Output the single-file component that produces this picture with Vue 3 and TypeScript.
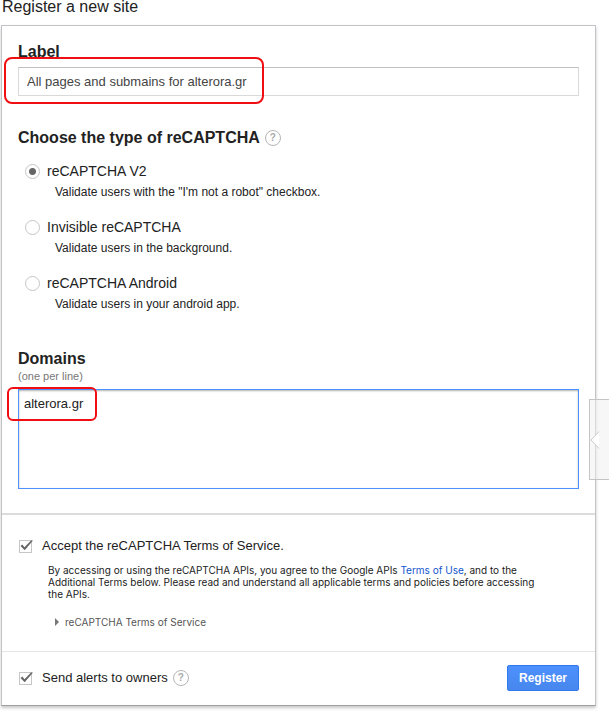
<script setup lang="ts">
import { ref } from 'vue'

interface CaptchaType {
  id: string
  name: string
  description: string
}

const types: CaptchaType[] = [
  { id: 'v2', name: 'reCAPTCHA V2', description: 'Validate users with the "I\'m not a robot" checkbox.' },
  { id: 'invisible', name: 'Invisible reCAPTCHA', description: 'Validate users in the background.' },
  { id: 'android', name: 'reCAPTCHA Android', description: 'Validate users in your android app.' },
]

const siteLabel = ref('All pages and submains for alterora.gr')
const selected = ref('v2')
const domains = ref('alterora.gr')
const accepted = ref(true)
const alerts = ref(true)
</script>

<template>
  <main class="page">
    <h1 class="title">Register a new site</h1>
    <form class="card" @submit.prevent>
      <section class="main">
        <label class="heading" for="site-label">Label</label>
        <div class="field label-field">
          <input id="site-label" v-model="siteLabel" class="text" type="text" />
          <span class="mark label-mark"></span>
        </div>

        <div class="type-head">
          <h2 id="type-heading" class="heading">Choose the type of reCAPTCHA</h2>
          <button class="help" type="button" aria-label="Help on types">?</button>
        </div>
        <div class="types" role="radiogroup" aria-labelledby="type-heading">
          <div v-for="t in types" :key="t.id" class="type">
            <input :id="t.id" v-model="selected" class="radio" type="radio" name="type" :value="t.id" />
            <label class="type-name" :for="t.id">{{ t.name }}</label>
            <p class="type-desc">{{ t.description }}</p>
          </div>
        </div>

        <label class="heading" for="domains">Domains</label>
        <p class="hint">(one per line)</p>
        <div class="field domain-field">
          <textarea id="domains" v-model="domains" class="area" spellcheck="false"></textarea>
          <span class="mark domain-mark"></span>
        </div>
      </section>

      <section class="terms">
        <div class="check-row">
          <span class="check">
            <input id="accept" v-model="accepted" type="checkbox" />
            <svg v-if="accepted" viewBox="0 0 16 14" aria-hidden="true"><path d="M2.500 6 4.300 4.600 6.500 7.200 13 .5h2L6.700 10.200z" /></svg>
          </span>
          <label for="accept">Accept the reCAPTCHA Terms of Service.</label>
        </div>
        <p class="legal">
          By accessing or using the reCAPTCHA APIs, you agree to the Google APIs <a href="#terms">Terms of Use</a>, and to the
          Additional Terms below. Please read and understand all applicable terms and policies before accessing the APIs.
        </p>
        <button class="expand" type="button"><span class="arrow"></span>reCAPTCHA Terms of Service</button>
      </section>

      <footer class="footer">
        <div class="check-row">
          <span class="check">
            <input id="alerts" v-model="alerts" type="checkbox" />
            <svg v-if="alerts" viewBox="0 0 16 14" aria-hidden="true"><path d="M2.500 6 4.300 4.600 6.500 7.200 13 .5h2L6.700 10.200z" /></svg>
          </span>
          <label for="alerts">Send alerts to owners</label>
          <button class="help" type="button" aria-label="Help on alerts">?</button>
        </div>
        <button class="register" type="submit">Register</button>
      </footer>

      <button class="drawer" type="button" aria-label="Open side panel">
        <svg viewBox="0 0 10 20" aria-hidden="true"><path d="M9 1.500 1 10l8 8.500" /></svg>
      </button>
    </form>
  </main>
</template>

<style>
body {
  margin: 0;
  background: #fff;
  overflow-x: hidden;
}
</style>

<style scoped>
.page,
.page * {
  box-sizing: border-box;
}
.page {
  font-family: 'Liberation Sans', Arial, sans-serif;
  color: #222;
  padding: 0 13px 5px 1px;
}
.title,
.heading,
.hint,
.type-desc,
.legal {
  margin: 0;
}
.title {
  font-size: 16px;
  font-weight: 400;
  line-height: 14px;
  padding: 0 1px 11px;
}
.card {
  position: relative;
  border: 1px solid #c2c3c6;
  border-bottom-color: #a0a0a2;
  box-shadow: 0 2px 3px rgba(0, 0, 0, 0.22);
}
.main {
  padding: 16px 16px 24px;
}
.heading {
  display: block;
  font-size: 16px;
  font-weight: 700;
  line-height: 20px;
}
.field {
  position: relative;
}
.label-field {
  margin-top: 5px;
}
.domain-field {
  margin-top: 6px;
}
input,
textarea,
button {
  margin: 0;
  font-family: inherit;
}
.text {
  display: block;
  width: 100%;
  height: 29px;
  padding: 0 8px;
  border: 1px solid #d9d9d9;
  border-top-color: #c0c0c0;
  font-size: 13px;
  color: #444;
  background: #fff;
}
.area {
  display: block;
  width: 100%;
  height: 100px;
  padding: 6px 5px;
  border: 1px solid #4d90fe;
  box-shadow: inset 0 1px 2px rgba(0, 0, 0, 0.3);
  font-size: 13px;
  line-height: 16px;
  color: #222;
  background: #fff;
  resize: none;
  outline: none;
}
.mark {
  position: absolute;
  border: 2px solid #f00e12;
  border-radius: 8px;
  pointer-events: none;
}
.label-mark {
  left: -14px;
  top: -10px;
  width: 260px;
  height: 47px;
}
.domain-mark {
  left: -11px;
  top: -2px;
  width: 90px;
  height: 34px;
  border-radius: 6px;
}
.type-head {
  display: flex;
  align-items: center;
  gap: 5px;
  margin-top: 32px;
}
.help {
  width: 16px;
  height: 16px;
  padding: 0;
  border: 1px solid #b5b5b5;
  border-radius: 50%;
  background: #fff;
  font-size: 10px;
  font-weight: 700;
  line-height: 14px;
  text-align: center;
  color: #aaa;
}
.types {
  display: grid;
  gap: 14px;
  margin: 13px 0 34px;
}
.type {
  display: grid;
  grid-template-columns: 15px 1fr;
  column-gap: 7px;
  align-items: center;
  padding-left: 7px;
}
.radio {
  appearance: none;
  width: 15px;
  height: 15px;
  border: 1px solid #c6c6c6;
  border-radius: 50%;
  background: #fff;
}
.radio:checked {
  background: radial-gradient(circle, #666 3px, #fff 4px);
}
.type-name {
  font-size: 14px;
  line-height: 20px;
}
.type-desc {
  grid-column: 2;
  padding-left: 8px;
  font-size: 12px;
  line-height: 22px;
}
.hint {
  font-size: 11px;
  line-height: 14px;
  color: #777;
}
.terms {
  padding: 21px 16px 23px;
  border-top: 2px solid #dcdcdc;
}
.check-row {
  display: flex;
  align-items: center;
  font-size: 13px;
  line-height: 20px;
}
.check-row label {
  margin-left: 8px;
}
.check-row .help {
  margin-left: 5px;
}
.check {
  position: relative;
  display: flex;
  width: 16px;
  padding-left: 1px;
}
.check input {
  appearance: none;
  width: 13px;
  height: 13px;
  border: 1px solid #c6c6c6;
  background: #fff;
}
.check svg {
  position: absolute;
  left: 0;
  top: 0;
  width: 16px;
  height: 14px;
  fill: #666;
  pointer-events: none;
}
.legal {
  margin: 8px 35px 0 30px;
  font-family: Inter, 'Liberation Sans', sans-serif;
  font-size: 10px;
  line-height: 12px;
}
.legal a {
  color: #15c;
  text-decoration: none;
}
.expand {
  display: flex;
  align-items: center;
  gap: 6px;
  margin: 16px 0 0 37px;
  padding: 0;
  border: 0;
  background: none;
  font-family: Inter, 'Liberation Sans', sans-serif;
  font-size: 10px;
  line-height: 12px;
  color: #555;
}
.arrow {
  border: 4px solid transparent;
  border-left-color: #777;
  border-right-width: 0;
}
.footer {
  display: flex;
  align-items: center;
  justify-content: space-between;
  padding: 13px 16px 14px;
  border-top: 1px solid #e5e5e5;
}
.register {
  min-width: 72px;
  height: 26px;
  padding: 0 8px;
  border: 1px solid #3079ed;
  border-radius: 2px;
  background: linear-gradient(#4d90fe, #4787ed);
  color: #fff;
  font-size: 12px;
  font-weight: 700;
}
.drawer {
  position: absolute;
  right: -14px;
  top: 373px;
  width: 20px;
  height: 81px;
  padding: 0;
  border: 1px solid #c4c4c4;
  border-right: 0;
  background: rgba(240, 240, 240, 0.5);
}
.drawer svg {
  display: block;
  width: 10px;
  height: 20px;
  fill: #fff;
  stroke: #ccc;
}
</style>
